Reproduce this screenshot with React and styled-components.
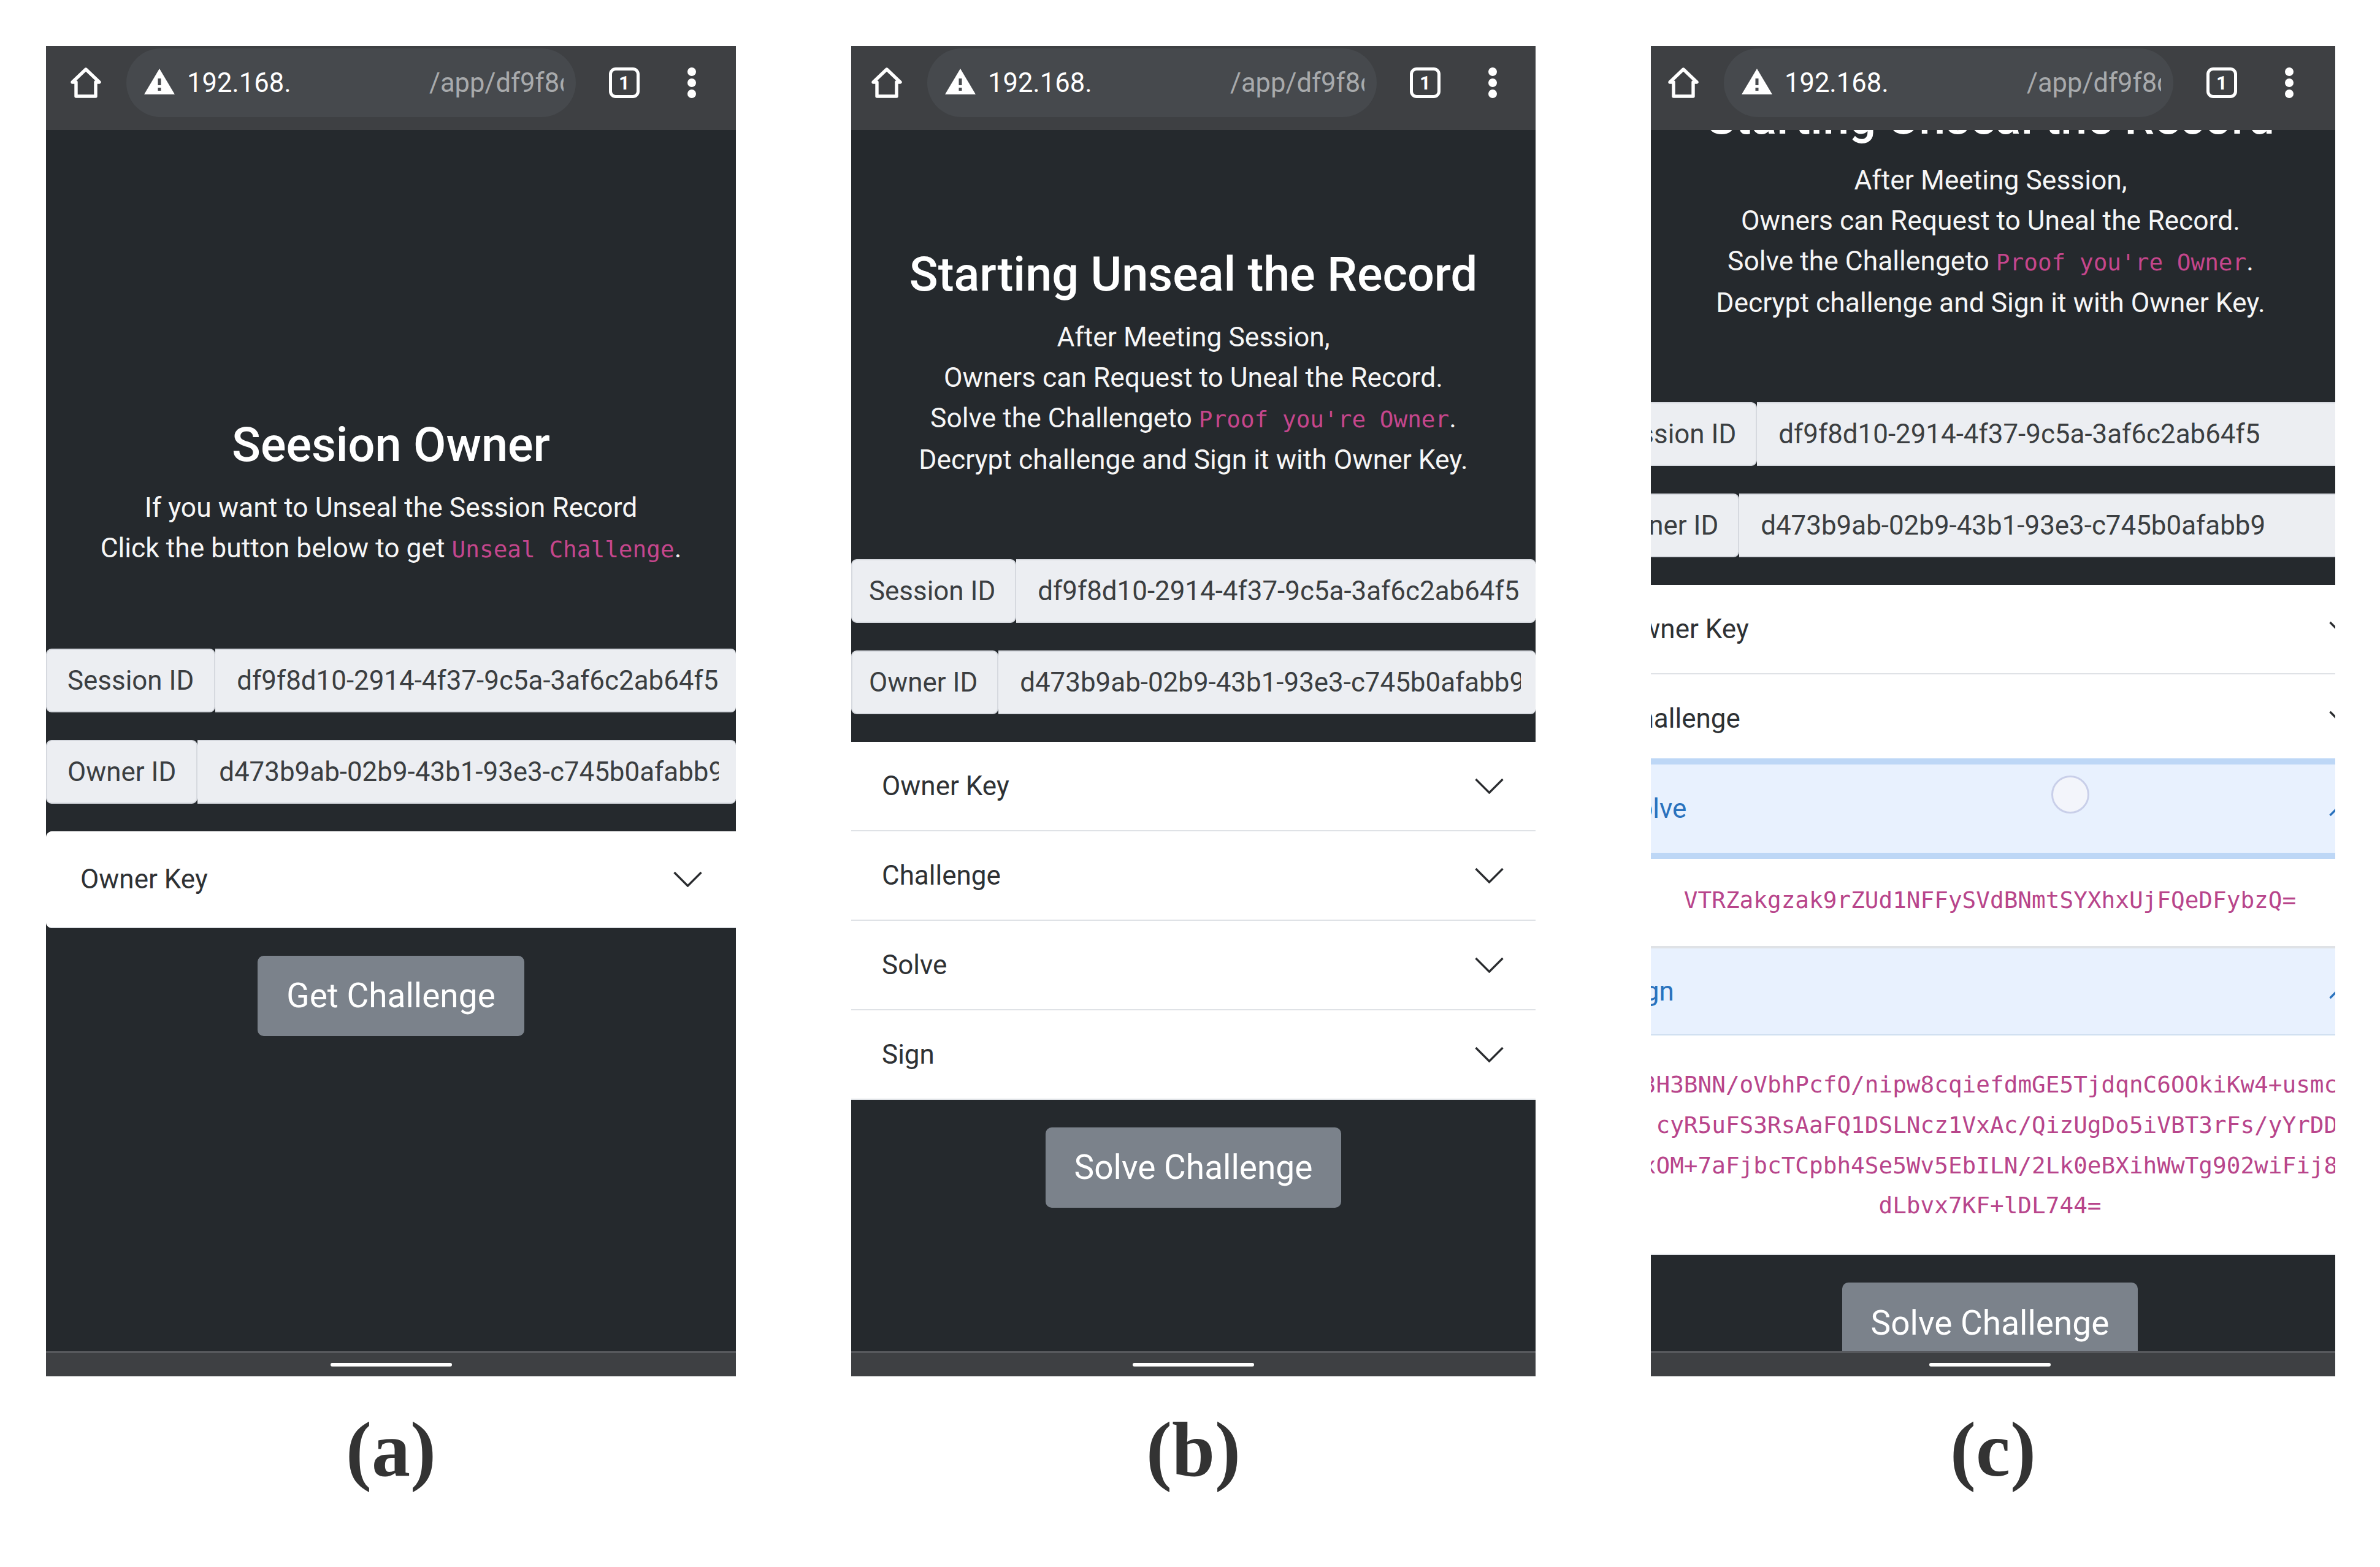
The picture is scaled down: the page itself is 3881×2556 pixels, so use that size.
import React from "react";
import styled, { createGlobalStyle } from "styled-components";

const Global = createGlobalStyle`
  html, body { margin: 0; padding: 0; background: #fff; }
  * { box-sizing: border-box; }
`;

const Page = styled.div`
  display: flex;
  gap: 188px;
  width: 3881px;
  height: 2556px;
  padding: 75px 0 0 75px;
  background: #fff;
  font-family: Roboto, "Liberation Sans", sans-serif;
  overflow: hidden;
`;

const Figure = styled.figure`
  margin: 0;
  width: ${(p) => p.$width}px;
  display: flex;
  flex-direction: column;
`;

const Screen = styled.div`
  height: 2170px;
  display: flex;
  flex-direction: column;
  background: #25292d;
`;

const Toolbar = styled.div`
  height: 137px;
  flex: none;
  display: flex;
  align-items: center;
  padding: 4px 0 21px ${(p) => p.$left}px;
  background: #3e4043;
`;

const HomeSvg = styled.svg`
  width: 50px;
  height: 50px;
  flex: none;
  margin-right: 41px;
`;

const Pill = styled.div`
  width: 733px;
  height: 112px;
  flex: none;
  border-radius: 56px;
  background: #46494d;
  display: flex;
  align-items: center;
  padding-left: 29px;
  font-size: 43.5px;
  color: #fff;
`;

const WarnSvg = styled.svg`
  width: 50px;
  height: 42px;
  flex: none;
  margin: -4px 20px 0 0;
`;

const PathText = styled.div`
  width: 219px;
  margin-left: auto;
  margin-right: 20px;
  overflow: hidden;
  white-space: nowrap;
  color: #a8aaac;
`;

const TabCount = styled.div`
  width: 50px;
  height: 50px;
  flex: none;
  margin-left: 54px;
  border: 5px solid #fff;
  border-radius: 11px;
  display: flex;
  align-items: center;
  justify-content: center;
  color: #fff;
  font-size: 31px;
  font-weight: 700;
`;

const Dots = styled.div`
  width: 14px;
  flex: none;
  margin-left: 78px;
  display: flex;
  flex-direction: column;
  gap: 4px;
  i {
    display: block;
    width: 14px;
    height: 14px;
    border-radius: 50%;
    background: #fff;
  }
`;

const Viewport = styled.div`
  flex: 1;
  min-height: 0;
  overflow: hidden;
`;

const Hero = styled.header`
  margin-top: ${(p) => p.$top}px;
  padding: 0 ${(p) => p.$nudge || 0}px 128.5px 0;
  text-align: center;
  color: #f6f6f6;
`;

const Title = styled.h3`
  margin: 0 0 19px;
  font-size: 77.5px;
  line-height: 100px;
  font-weight: 500;
  color: #fff;
  white-space: nowrap;
`;

const Line = styled.div`
  font-size: 44.4px;
  line-height: 66px;
  white-space: nowrap;
`;

const Code = styled.code`
  font-family: "DejaVu Sans Mono", "Liberation Mono", monospace;
  font-size: 37.7px;
  color: #c5468c;
`;

const Shifted = styled.div`
  margin-left: ${(p) => p.$shift || 0}px;
  width: ${(p) => (p.$wide ? `${p.$wide}px` : "auto")};
`;

const IdRow = styled.div`
  display: flex;
  height: 104px;
  margin-bottom: 45px;
  font-size: 43.9px;
  color: #3b3e41;
`;

const IdLabel = styled.div`
  flex: none;
  display: flex;
  align-items: center;
  padding: ${(p) => p.$pad};
  background: #eceef2;
  border: 2px solid #d6d9df;
  border-radius: 9px;
  white-space: nowrap;
`;

const IdValue = styled.div`
  flex: 1;
  min-width: 0;
  display: flex;
  align-items: center;
  padding: 0 ${(p) => p.$end}px 0 35px;
  background: #eceef2;
  border: 2px solid #d6d9df;
  border-left: none;
  border-right: none;
  border-radius: 0 8px 8px 0;
`;

const IdText = styled.div`
  overflow: hidden;
  white-space: nowrap;
`;

const Accordion = styled.div`
  background: #fff;
  border-radius: ${(p) => (p.$rounded ? "10px 0 0 10px" : "0")};
  overflow: hidden;
`;

const Header = styled.div`
  position: relative;
  height: ${(p) => p.$height}px;
  margin-top: ${(p) => p.$overlap || 0}px;
  display: flex;
  align-items: center;
  justify-content: space-between;
  padding: 0 ${(p) => p.$right}px 0 ${(p) => p.$leftPad}px;
  font-size: 44px;
  color: ${(p) => (p.$open ? "#2a72bd" : "#2e3134")};
  background: ${(p) => (p.$open ? "#e8f1fe" : "#fff")};
  border-bottom: 2px solid #dfe2e6;
  ${(p) => p.$focus && "border-top: 10px solid #bdd7f6; border-bottom: 10px solid #bdd7f6;"}
  ${(p) => p.$open && !p.$focus && "border-top: 2px solid #dfe2e6; border-bottom: 2px solid #cfdff0;"}
`;

const Chevron = styled.svg`
  width: 47px;
  height: 26px;
  flex: none;
  transform: ${(p) => (p.$up ? "rotate(180deg)" : "none")};
`;

const Touch = styled.span`
  position: absolute;
  left: 754px;
  top: 18px;
  width: 62px;
  height: 62px;
  border-radius: 50%;
  background: #f3f5fb;
  border: 3px solid #c9cfe9;
`;

const Panel = styled.div`
  padding: ${(p) => p.$top}px 40px ${(p) => p.$bottom}px;
  background: #fff;
  border-bottom: 2px solid #dfe2e6;
  text-align: center;
  font-family: "DejaVu Sans Mono", "Liberation Mono", monospace;
  font-size: 37.7px;
  line-height: 65.7px;
  color: #b8458b;
  word-break: break-all;
`;

const Action = styled.div`
  display: flex;
  justify-content: center;
  margin-top: 45px;
`;

const Button = styled.button`
  height: 131px;
  flex: none;
  padding: 0 47px;
  border: none;
  border-radius: 10px;
  background: #7b828b;
  color: #fff;
  font-family: Roboto, "Liberation Sans", sans-serif;
  font-size: 55px;
`;

const NavBar = styled.div`
  height: 41px;
  flex: none;
  display: flex;
  align-items: center;
  justify-content: center;
  padding-right: ${(p) => p.$nudge || 0}px;
  background: #3e4043;
  border-top: 3px solid #57595d;
`;

const NavHandle = styled.div`
  width: 198px;
  height: 6px;
  border-radius: 3px;
  background: #fff;
`;

const Caption = styled.figcaption`
  margin-top: 55px;
  text-align: center;
  font-family: "Liberation Serif", serif;
  font-weight: 700;
  font-size: 126px;
  line-height: 130px;
  color: #333;
`;

const Chrome = ({ left }) => (
  <Toolbar $left={left}>
    <HomeSvg viewBox="0 0 50 50" fill="none" stroke="#fff" strokeWidth="5.4" strokeLinejoin="round" strokeLinecap="round">
      <path d="M3 24 L25 3 L47 24 L41 24 L41 47 L9 47 L9 24 Z" />
    </HomeSvg>
    <Pill>
      <WarnSvg viewBox="0 0 50 42">
        <path d="M25 0 L50 42 L0 42 Z" fill="#fff" />
        <rect x="22.5" y="16" width="5" height="11" fill="#46494d" />
        <rect x="22.5" y="31" width="5" height="5" fill="#46494d" />
      </WarnSvg>
      <span>192.168.</span>
      <PathText>/app/df9f8d10-2914</PathText>
    </Pill>
    <TabCount>1</TabCount>
    <Dots>
      <i />
      <i />
      <i />
    </Dots>
  </Toolbar>
);

const Ids = ({ pad, end }) => (
  <>
    <IdRow>
      <IdLabel $pad={pad}>Session ID</IdLabel>
      <IdValue $end={end}>
        <IdText>df9f8d10-2914-4f37-9c5a-3af6c2ab64f5</IdText>
      </IdValue>
    </IdRow>
    <IdRow>
      <IdLabel $pad={pad}>Owner ID</IdLabel>
      <IdValue $end={end}>
        <IdText>d473b9ab-02b9-43b1-93e3-c745b0afabb9</IdText>
      </IdValue>
    </IdRow>
  </>
);

const Arrow = ({ up, color = "#2a2c2f" }) => (
  <Chevron $up={up} viewBox="0 0 47 26" fill="none" stroke={color} strokeWidth="3.4">
    <path d="M1.5 2 L23.5 24 L45.5 2" />
  </Chevron>
);

const Nav = ({ nudge }) => (
  <NavBar $nudge={nudge}>
    <NavHandle />
  </NavBar>
);

const SIGN =
  "Kv3H3BNN/oVbhPcfO/nipw8cqiefdmGE5TjdqnC6OOkiKw4+usmcRw" +
  "x1.cyR5uFS3RsAaFQ1DSLNcz1VxAc/QizUgDo5iVBT3rFs/yYrDDaM" +
  "9kxOM+7aFjbcTCpbh4Se5Wv5EbILN/2Lk0eBXihWwTg902wiFij8Qz" +
  "dLbvx7KF+lDL744=";

const Intro = ({ top, nudge }) => (
  <Hero $top={top} $nudge={nudge}>
    <Title>Starting Unseal the Record</Title>
    <Line>After Meeting Session,</Line>
    <Line>Owners can Request to Uneal the Record.</Line>
    <Line>
      Solve the Challengeto <Code>Proof you're Owner</Code>.
    </Line>
    <Line>Decrypt challenge and Sign it with Owner Key.</Line>
  </Hero>
);

export default function App() {
  return (
    <Page>
      <Global />
      <Figure $width={1125}>
        <Screen>
          <Chrome left={40} />
          <Viewport>
            <Hero $top={464}>
              <Title>Seesion Owner</Title>
              <Line>If you want to Unseal the Session Record</Line>
              <Line>
                Click the button below to get <Code>Unseal Challenge</Code>.
              </Line>
            </Hero>
            <Ids pad="0 33px 0 33px" end={28} />
            <Accordion $rounded>
              <Header $height={158} $leftPad={56} $right={55}>
                Owner Key
                <Arrow />
              </Header>
            </Accordion>
            <Action>
              <Button>Get Challenge</Button>
            </Action>
          </Viewport>
          <Nav />
        </Screen>
        <Caption>(a)</Caption>
      </Figure>

      <Figure $width={1116}>
        <Screen>
          <Chrome left={33} />
          <Viewport>
            <Intro top={186} />
            <Ids pad="0 32px 0 27px" end={24} />
            <Accordion>
              {["Owner Key", "Challenge", "Solve", "Sign"].map((t) => (
                <Header key={t} $height={146} $leftPad={50} $right={52}>
                  {t}
                  <Arrow />
                </Header>
              ))}
            </Accordion>
            <Action>
              <Button>Solve Challenge</Button>
            </Action>
          </Viewport>
          <Nav />
        </Screen>
        <Caption>(b)</Caption>
      </Figure>

      <Figure $width={1116}>
        <Screen>
          <Chrome left={28} />
          <Viewport>
            <Intro top={-70} nudge={8} />
            <Shifted $shift={-101} $wide={1308}>
              <Ids pad="0 32px" end={28} />
              <Accordion>
                <Header $height={146} $leftPad={53} $right={54}>
                  Owner Key
                  <Arrow />
                </Header>
                <Header $height={146} $leftPad={53} $right={54}>
                  Challenge
                  <Arrow />
                </Header>
                <Header $height={164} $overlap={-9} $leftPad={53} $right={54} $open $focus>
                  Solve
                  <Touch />
                  <Arrow up color="#2a72bd" />
                </Header>
                <Panel $top={35} $bottom={42}>
                  VTRZakgzak9rZUd1NFFySVdBNmtSYXhxUjFQeDFybzQ=
                </Panel>
                <Header $height={144} $leftPad={53} $right={54} $open>
                  Sign
                  <Arrow up color="#2a72bd" />
                </Header>
                <Panel $top={48} $bottom={45}>
                  {SIGN}
                </Panel>
              </Accordion>
              <Action>
                <Button>Solve Challenge</Button>
              </Action>
            </Shifted>
          </Viewport>
          <Nav nudge={10} />
        </Screen>
        <Caption>(c)</Caption>
      </Figure>
    </Page>
  );
}
